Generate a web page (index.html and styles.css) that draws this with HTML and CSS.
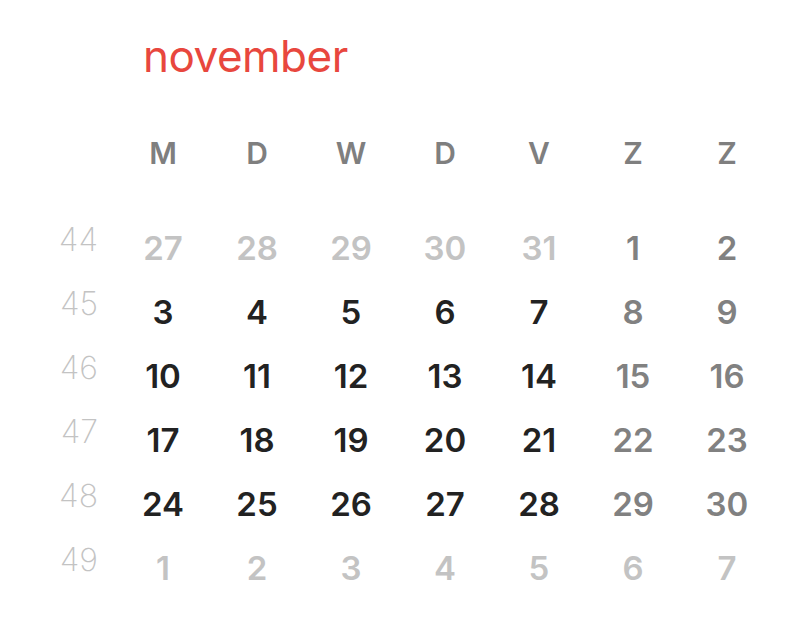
FILE: index.html
```html
<!DOCTYPE html>
<html>
<head>
<meta charset="utf-8">
<link rel="stylesheet" href="styles.css">
</head>
<body>
<div class="cal">
  <h1 class="title">november</h1>
  <div class="grid head">
    <div class="wk"></div>
    <div class="hd">M</div><div class="hd">D</div><div class="hd">W</div><div class="hd">D</div><div class="hd">V</div><div class="hd">Z</div><div class="hd">Z</div>
  </div>
  <div class="grid body">
    <div class="wk">44</div>
    <div class="d out">27</div><div class="d out">28</div><div class="d out">29</div><div class="d out">30</div><div class="d out">31</div><div class="d we">1</div><div class="d we">2</div>

    <div class="wk">45</div>
    <div class="d">3</div><div class="d">4</div><div class="d">5</div><div class="d">6</div><div class="d">7</div><div class="d we">8</div><div class="d we">9</div>

    <div class="wk">46</div>
    <div class="d">10</div><div class="d">11</div><div class="d">12</div><div class="d">13</div><div class="d">14</div><div class="d we">15</div><div class="d we">16</div>

    <div class="wk">47</div>
    <div class="d">17</div><div class="d">18</div><div class="d">19</div><div class="d">20</div><div class="d">21</div><div class="d we">22</div><div class="d we">23</div>

    <div class="wk">48</div>
    <div class="d">24</div><div class="d">25</div><div class="d">26</div><div class="d">27</div><div class="d">28</div><div class="d we">29</div><div class="d we">30</div>

    <div class="wk">49</div>
    <div class="d out">1</div><div class="d out">2</div><div class="d out">3</div><div class="d out">4</div><div class="d out">5</div><div class="d out">6</div><div class="d out">7</div>
  </div>
</div>
</body>
</html>
```
FILE: styles.css
```css
html, body {
  margin: 0;
  padding: 0;
  background: #ffffff;
}
body {
  font-family: Inter, "Liberation Sans", sans-serif;
  width: 802px;
  height: 626px;
  overflow: hidden;
}
.cal {
  padding-top: 26px;
}
.title {
  margin: 0 0 0 143px;
  font-size: 44px;
  font-weight: 400;
  line-height: 60px;
  color: #e8473e;
  letter-spacing: -0.5px;
}
.grid {
  display: grid;
  grid-template-columns: 116px repeat(7, 94px);
}
.head {
  margin-top: 40px;
  grid-template-rows: 54px;
}
.body {
  margin-top: 36px;
  grid-auto-rows: 64px;
}
.hd {
  text-align: center;
  font-size: 30px;
  font-weight: 600;
  color: #7f7f7f;
  line-height: 54px;
}
.d {
  text-align: center;
  font-size: 33px;
  font-weight: 560;
  color: #222222;
  line-height: 64px;
}
.d.we { color: #818181; }
.d.out { color: #c3c3c3; }
.wk {
  text-align: right;
  padding-right: 18px;
  font-size: 32px;
  font-weight: 200;
  color: #c3c3c3;
  line-height: 48px;
}
```
